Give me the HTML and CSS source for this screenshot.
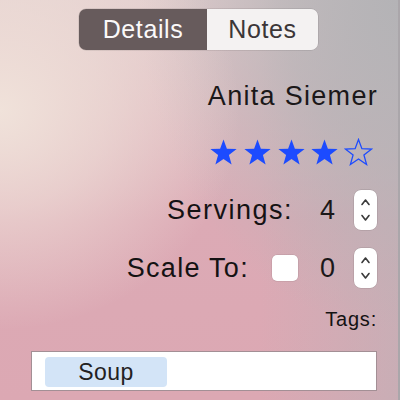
FILE: index.html
```html
<!DOCTYPE html>
<html>
<head>
<meta charset="utf-8">
<link rel="stylesheet" href="styles.css">
</head>
<body>
<div class="page">
  <div class="segmented">
    <div class="seg seg-active">Details</div>
    <div class="seg">Notes</div>
  </div>
  <div class="panel">
    <div class="name">Anita Siemer</div>
    <div class="stars">
      <svg class="star" viewBox="0 0 30 29"><polygon class="full" points="15,1 18.5,10.6 28.6,10.9 20.6,17.1 23.4,26.9 15,21.2 6.6,26.9 9.4,17.1 1.4,10.9 11.5,10.6"/></svg>
      <svg class="star" viewBox="0 0 30 29"><polygon class="full" points="15,1 18.5,10.6 28.6,10.9 20.6,17.1 23.4,26.9 15,21.2 6.6,26.9 9.4,17.1 1.4,10.9 11.5,10.6"/></svg>
      <svg class="star" viewBox="0 0 30 29"><polygon class="full" points="15,1 18.5,10.6 28.6,10.9 20.6,17.1 23.4,26.9 15,21.2 6.6,26.9 9.4,17.1 1.4,10.9 11.5,10.6"/></svg>
      <svg class="star" viewBox="0 0 30 29"><polygon class="full" points="15,1 18.5,10.6 28.6,10.9 20.6,17.1 23.4,26.9 15,21.2 6.6,26.9 9.4,17.1 1.4,10.9 11.5,10.6"/></svg>
      <svg class="star" viewBox="0 0 30 29"><polygon class="empty" points="15,1 18.5,10.6 28.6,10.9 20.6,17.1 23.4,26.9 15,21.2 6.6,26.9 9.4,17.1 1.4,10.9 11.5,10.6"/></svg>
    </div>
    <div class="row row-servings">
      <span class="label label-servings">Servings:</span>
      <span class="num">4</span>
      <div class="stepper">
        <svg viewBox="0 0 23 40"><path d="M8 14.5 L11.5 10 L15 14.5"/><path d="M8 25.5 L11.5 30 L15 25.5"/></svg>
      </div>
    </div>
    <div class="row row-scale">
      <span class="label label-scale">Scale To:</span>
      <span class="checkbox"></span>
      <span class="num">0</span>
      <div class="stepper">
        <svg viewBox="0 0 23 40"><path d="M8 14.5 L11.5 10 L15 14.5"/><path d="M8 25.5 L11.5 30 L15 25.5"/></svg>
      </div>
    </div>
    <div class="tags-label">Tags:</div>
  </div>
  <div class="tagfield">
    <span class="token">Soup</span>
  </div>
</div>
</body>
</html>
```
FILE: styles.css
```css
html, body {
  margin: 0;
  padding: 0;
}
body {
  width: 400px;
  height: 400px;
  overflow: hidden;
  font-family: "Liberation Sans", Arial, sans-serif;
}
.page {
  width: 400px;
  height: 400px;
  box-sizing: border-box;
  display: flex;
  flex-direction: column;
  background:
    radial-gradient(ellipse 240px 220px at 0 110px, rgba(240,226,218,1) 0%, rgba(240,226,218,0.6) 45%, rgba(240,226,218,0) 100%),
    radial-gradient(ellipse 260px 330px at 400px 0, rgba(180,179,182,1) 0%, rgba(180,179,182,0.7) 45%, rgba(180,179,182,0) 100%),
    linear-gradient(to right, rgba(185,178,183,0) 65%, rgba(185,178,183,0.55) 100%),
    linear-gradient(to bottom, #e2cccd 0%, #dcaab5 55%, #dca8b3 100%);
  box-shadow: inset -2px 0 0 #aaa6aa;
}
.segmented {
  margin: 9px 0 0 79px;
  width: 239px;
  height: 41px;
  display: flex;
  border-radius: 7px;
  overflow: hidden;
  box-shadow: 0 0 0 0.5px rgba(0,0,0,0.15);
}
.seg {
  font-size: 25px;
  letter-spacing: 0.6px;
  line-height: 41px;
  text-align: center;
  background: #f4f2f2;
  color: #3b3637;
  flex: 0 0 111px;
}
.seg-active {
  flex: 0 0 128px;
  background: #675b5c;
  color: #fbf9f9;
}
.panel {
  display: flex;
  flex-direction: column;
  align-items: flex-end;
  padding-right: 23px;
}
.name {
  margin-top: 31px;
  font-size: 27px;
  line-height: 30px;
  letter-spacing: 1.3px;
  margin-right: -1px;
  color: #1b1819;
}
.stars {
  margin-top: 27px;
  display: flex;
  gap: 4.75px;
  margin-right: 4px;
}
.star {
  width: 29px;
  height: 29px;
  display: block;
}
.star .full {
  fill: #1c4bff;
}
.star .empty {
  fill: none;
  stroke: #1c4bff;
  stroke-width: 1.3;
}
.row {
  display: flex;
  align-items: center;
  height: 40px;
}
.row-servings {
  margin-top: 23px;
}
.row-scale {
  margin-top: 18px;
}
.label {
  font-size: 27px;
  line-height: 30px;
  color: #141213;
}
.label-servings {
  letter-spacing: 1.5px;
  margin-right: 27px;
}
.label-scale {
  letter-spacing: 1.3px;
  margin-right: 23px;
}
.num {
  font-size: 27px;
  line-height: 30px;
  color: #1b1819;
  width: 15px;
  text-align: center;
  margin-right: 19px;
}
.checkbox {
  width: 26px;
  height: 26px;
  border-radius: 5px;
  background: #fff;
  margin-right: 22px;
  box-shadow: 0 0 0 0.5px rgba(0,0,0,0.12);
}
.stepper {
  width: 23px;
  height: 40px;
  border-radius: 7px;
  background: #fff;
  box-shadow: 0 0 0 0.5px rgba(0,0,0,0.15);
}
.stepper svg {
  width: 23px;
  height: 40px;
  display: block;
}
.stepper path {
  fill: none;
  stroke: #3a3a3a;
  stroke-width: 1.6;
  stroke-linecap: round;
  stroke-linejoin: round;
}
.tags-label {
  margin-top: 20px;
  font-size: 20px;
  line-height: 22px;
  letter-spacing: 0.8px;
  color: #141213;
}
.tagfield {
  margin: 21px 0 0 31px;
  width: 346px;
  height: 40px;
  box-sizing: border-box;
  border: 1px solid #a38f95;
  background: #fff;
  padding: 5px 13px;
  display: flex;
}
.token {
  width: 122px;
  height: 30px;
  border-radius: 4px;
  background: #d3e4f7;
  color: #232122;
  font-size: 23px;
  line-height: 30px;
  text-align: center;
  letter-spacing: 0.5px;
}
```
